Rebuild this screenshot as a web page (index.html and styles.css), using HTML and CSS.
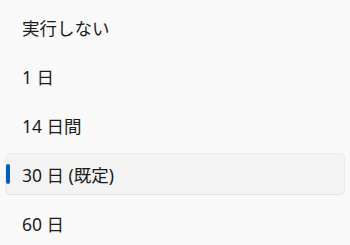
FILE: index.html
```html
<!DOCTYPE html>
<html lang="ja">
<head>
<meta charset="utf-8">
<link rel="stylesheet" href="styles.css">
</head>
<body>
<ul class="list">
  <li class="item">実行しない</li>
  <li class="item">1 日</li>
  <li class="item">14 日間</li>
  <li class="item selected"><span class="indicator"></span>30 日 (既定)</li>
  <li class="item">60 日</li>
</ul>
</body>
</html>
```
FILE: styles.css
```css
html, body {
  margin: 0;
  padding: 0;
  background: #f9f9f9;
}
body {
  width: 350px;
  height: 245px;
  overflow: hidden;
  font-family: "Noto Sans", "Noto Sans CJK JP", sans-serif;
  font-size: 17.5px;
  color: #1b1b1b;
}
.list {
  list-style: none;
  margin: 0;
  padding: 6px 5px 0 5px;
  display: flex;
  flex-direction: column;
  gap: 7px;
}
.item {
  position: relative;
  height: 42px;
  display: flex;
  align-items: center;
  padding-left: 16px;
  box-sizing: border-box;
  border-radius: 5px;
  border: 1px solid transparent;
}
.selected {
  background: #f3f3f3;
  border-color: #ececec;
  border-bottom-color: #e3e3e3;
}
.indicator {
  position: absolute;
  left: 0px;
  top: 10px;
  width: 4px;
  height: 20px;
  border-radius: 2px;
  background: #005fb8;
}
```
